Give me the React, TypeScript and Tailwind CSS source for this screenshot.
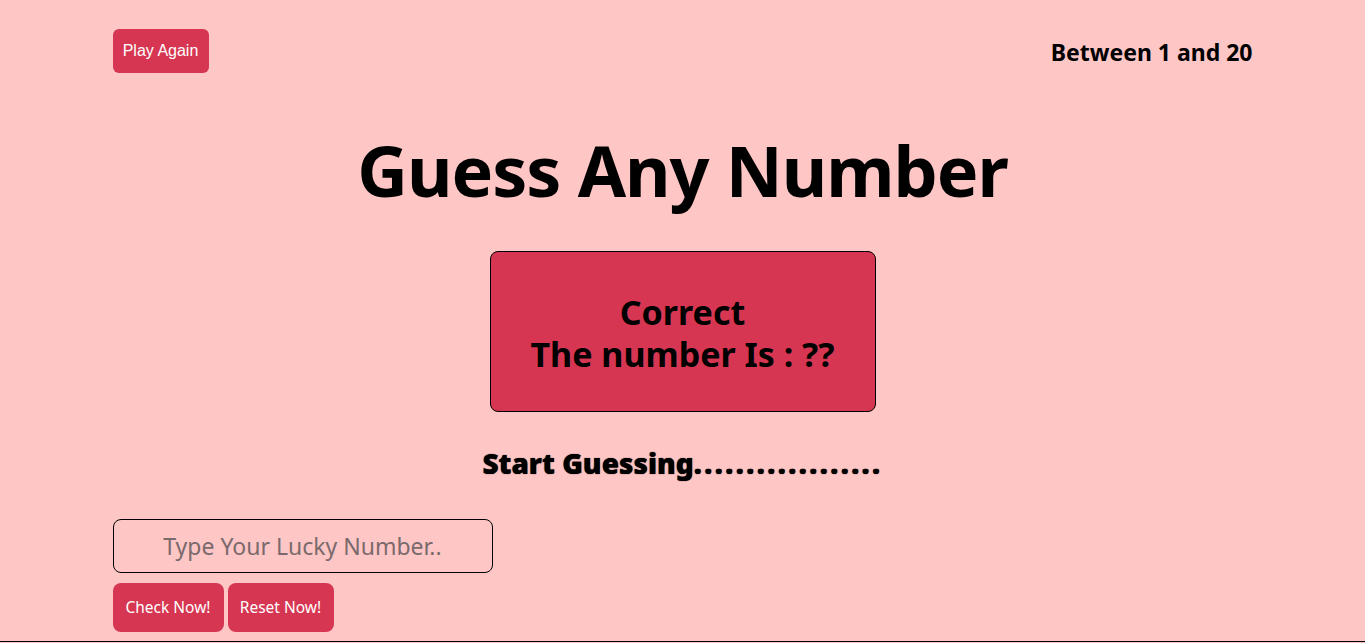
export default function App() {
  return (
    <div className="min-h-[643px] bg-[#ffc6c6] font-['Noto_Sans',sans-serif] text-black">
      <div className="h-[642px] border-b border-black">
        <div className="mx-auto w-[1140px] pt-[29px]">
          {/* Header */}
          <div className="flex items-start justify-between">
            <button className="h-[44px] w-[96px] rounded-md bg-[#d63651] font-['Liberation_Sans',sans-serif] text-[16px] text-white">
              Play Again
            </button>
            <p className="mt-[8px] text-[23px] font-bold leading-[30px]">Between 1 and 20</p>
          </div>

          {/* Title */}
          <h1 className="mt-[52px] text-center text-[70px] font-bold leading-[90px] tracking-[-1px]">
            Guess Any Number
          </h1>

          {/* Result box */}
          <div className="mx-auto mt-[36px] flex h-[161px] w-[386px] flex-col items-center justify-center rounded-lg border border-black bg-[#d63651] pt-[2px] text-center text-[34px] font-bold leading-[42px]">
            <span>Correct</span>
            <span>The number Is : ??</span>
          </div>

          <p className="mt-[33px] text-center text-[28px] font-black leading-[36px] [text-shadow:0_0_1px_#000]">
            Start Guessing<span className="tracking-[2.4px]">..................</span>
          </p>

          {/* Input + actions */}
          <input
            type="text"
            placeholder="Type Your Lucky Number.."
            className="mt-[38px] block h-[54px] w-[380px] rounded-lg border border-black bg-transparent text-center text-[23px] outline-none placeholder:text-[#7a6a6c]"
          />
          <div className="mt-[10px] flex gap-[4px]">
            <button className="h-[49px] w-[111px] rounded-lg bg-[#d63651] text-[15.5px] text-white">
              Check Now!
            </button>
            <button className="h-[49px] w-[106px] rounded-lg bg-[#d63651] text-[15.5px] text-white">
              Reset Now!
            </button>
          </div>
        </div>
      </div>
    </div>
  );
}
